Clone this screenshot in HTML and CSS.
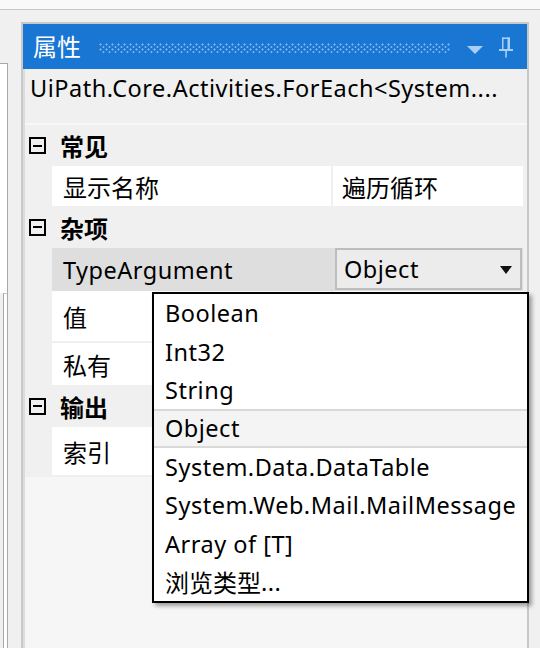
FILE: index.html
```html
<!DOCTYPE html>
<html lang="zh-CN">
<head>
<meta charset="utf-8">
<title>属性</title>
<link rel="stylesheet" href="styles.css">
</head>
<body>
<div class="topstrip"></div>
<div class="main">
  <div class="leftcol">
    <div class="lbox1"></div>
    <div class="lbox2"></div>
  </div>
  <div class="panel">
    <div class="titlebar">
      <span class="title zh">属性</span>
      <span class="dots"></span>
      <svg class="menu-tri" width="16" height="8" viewBox="0 0 16 8"><polygon points="0,0 16,0 8,8" fill="#a9cff5"/></svg>
      <svg class="pin" width="16" height="21" viewBox="0 0 16 21">
        <rect x="4" y="0.5" width="1.5" height="12" fill="#a9cff5"/>
        <rect x="4" y="0.5" width="8" height="1.5" fill="#a9cff5"/>
        <rect x="9.5" y="0.5" width="2.5" height="12" fill="#a9cff5"/>
        <rect x="1" y="12" width="14" height="2" fill="#a9cff5"/>
        <rect x="7.25" y="14" width="1.6" height="6.5" fill="#a9cff5"/>
      </svg>
    </div>
    <div class="body">
      <div class="subtitle">UiPath.Core.Activities.ForEach&lt;System....</div>
      <div class="grid">
        <div class="cat h41"><span class="box"></span><span class="zh">常见</span></div>
        <div class="prop h40">
          <div class="gutter"></div>
          <div class="name"><span class="zh">显示名称</span></div>
          <div class="sep"></div>
          <div class="val"><span class="zh">遍历循环</span></div>
        </div>
        <div class="cat h42"><span class="box"></span><span class="zh">杂项</span></div>
        <div class="prop h43 selected">
          <div class="gutter"></div>
          <div class="name">TypeArgument</div>
          <div class="sep"></div>
          <div class="val">
            <div class="combo"><span>Object</span><svg width="12" height="8" viewBox="0 0 12 8"><polygon points="0,0 12,0 6,8" fill="#111"/></svg></div>
          </div>
        </div>
        <div class="prop h50">
          <div class="gutter"></div>
          <div class="name"><span class="zh">值</span></div>
          <div class="sep"></div>
          <div class="val"></div>
        </div>
        <div class="prop h42 gap">
          <div class="gutter"></div>
          <div class="name"><span class="zh">私有</span></div>
          <div class="sep"></div>
          <div class="val"></div>
        </div>
        <div class="cat h42"><span class="box"></span><span class="zh">输出</span></div>
        <div class="prop h48">
          <div class="gutter"></div>
          <div class="name"><span class="zh">索引</span></div>
          <div class="sep"></div>
          <div class="val"></div>
        </div>
      </div>
      <div class="empty"></div>
    </div>
  </div>
</div>
<div class="dropdown">
  <div class="item">Boolean</div>
  <div class="item">Int32</div>
  <div class="item">String</div>
  <div class="item hover">Object</div>
  <div class="item">System.Data.DataTable</div>
  <div class="item">System.Web.Mail.MailMessage</div>
  <div class="item">Array of [T]</div>
  <div class="item"><span class="zh">浏览类型</span>...</div>
</div>
</body>
</html>
```
FILE: styles.css
```css
* { box-sizing: border-box; }
html, body { margin: 0; padding: 0; }
body {
  width: 540px;
  height: 648px;
  overflow: hidden;
  background: #f0f0f0;
  font-family: "Noto Sans", "Noto Sans CJK SC", sans-serif;
  font-size: 23.5px;
  letter-spacing: 0.5px;
  color: #000;
  position: relative;
}
.zh { font-family: "Noto Sans CJK SC", sans-serif; font-size: 24px; letter-spacing: 0; }

.topstrip {
  height: 10px;
  background: #f9f9f9;
  border-bottom: 1px solid #c9c9c9;
}
.main {
  display: flex;
  padding-top: 12px;
  height: 638px;
}
.leftcol {
  width: 8px;
  margin-top: 41px;
  display: flex;
  flex-direction: column;
}
.lbox1 {
  height: 230px;
  background: #fff;
  border-top: 1px solid #a8a8a8;
  border-right: 1px solid #a8a8a8;
}
.lbox2 {
  flex: 1;
  margin-left: 3px;
  background: #fff;
  border-top: 1px solid #c4c4c4;
  border-left: 1px solid #a8a8a8;
  border-right: 1px solid #a8a8a8;
}
.panel {
  margin-left: 13px;
  width: 508px;
  border: 2px solid #c8c8c8;
  border-bottom: none;
  display: flex;
  flex-direction: column;
}
.titlebar {
  height: 45px;
  background: #1976d2;
  display: flex;
  align-items: center;
  padding-left: 10px;
  padding-right: 13px;
}
.title {
  color: #fff;
  line-height: 30px;
  margin-top: -2px;
}
.dots {
  flex: 1;
  height: 10px;
  margin-left: 18px;
  margin-right: 17px;
  margin-top: 2px;
  background-image:
    radial-gradient(circle at 1.5px 1.5px, #7db3ee 0.9px, transparent 1.2px),
    radial-gradient(circle at 4.5px 4px, #7db3ee 0.9px, transparent 1.2px);
  background-size: 6px 5px, 6px 5px;
}
.menu-tri { margin-top: 6px; margin-right: 15px; }
.pin { margin-top: 1px; }

.body {
  flex: 1;
  display: flex;
  flex-direction: column;
  border-left: 2px solid #dcdcdc;
  background: #f6f6f6;
}
.subtitle {
  height: 56px;
  background: #f0f0f0;
  border-bottom: 2px solid #f8f8f8;
  padding-left: 5px;
  padding-top: 4px;
  line-height: 30px;
  white-space: nowrap;
}
.grid { background: #f0f0f0; padding-bottom: 2px; }
.h40 { height: 40px; }
.h41 { height: 41px; }
.h42 { height: 42px; }
.h43 { height: 43px; }
.h48 { height: 48px; }
.h50 { height: 50px; }
.gap { margin-top: 2px; }
.cat {
  display: flex;
  align-items: center;
  font-weight: bold;
}
.cat .zh { font-weight: bold; }
.box {
  width: 17px;
  height: 17px;
  margin-left: 4px;
  margin-right: 14px;
  border: 2px solid #000;
  position: relative;
  flex: none;
}
.box::after {
  content: "";
  position: absolute;
  left: 2px;
  right: 2px;
  top: 5.5px;
  height: 2px;
  background: #000;
}
.prop { display: flex; }
.gutter { width: 27px; flex: none; }
.name {
  width: 279px;
  flex: none;
  background: #fff;
  padding-left: 11px;
  display: flex;
  align-items: center;
  white-space: nowrap;
}
.sep { width: 2px; flex: none; }
.val {
  width: 190px;
  flex: none;
  background: #fff;
  padding-left: 9px;
  display: flex;
  align-items: center;
}
.selected .name, .selected .sep { background: #dedede; }
.selected .val { background: #dedede; padding-left: 2px; align-items: flex-start; }
.combo {
  width: 187px;
  height: 42px;
  border: 2px solid #bdbdbd;
  background: #ececec;
  display: flex;
  align-items: center;
  justify-content: space-between;
  padding-left: 7px;
  padding-right: 8px;
}
.combo svg { margin-top: 2px; }
.empty { flex: 1; background: #f6f6f6; }

.dropdown {
  position: absolute;
  left: 152px;
  top: 292px;
  width: 377px;
  height: 311px;
  background: #fff;
  border: 2px solid #000;
  box-shadow: 3px 3px 4px rgba(0, 0, 0, 0.35);
}
.item {
  height: 38.4px;
  padding-left: 11px;
  display: flex;
  align-items: center;
  white-space: nowrap;
}
.item.hover {
  background: #f4f4f4;
  border-top: 2px solid #d9d9d9;
  border-bottom: 2px solid #d9d9d9;
}
```
